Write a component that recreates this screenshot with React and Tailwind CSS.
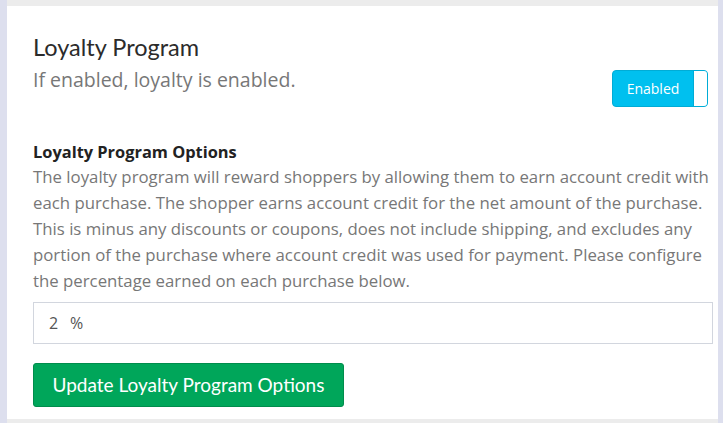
import React, { useState } from 'react';

const lines = [
  'The loyalty program will reward shoppers by allowing them to earn account credit with',
  'each purchase. The shopper earns account credit for the net amount of the purchase.',
  'This is minus any discounts or coupons, does not include shipping, and excludes any',
  'portion of the purchase where account credit was used for payment. Please configure',
  'the percentage earned on each purchase below.',
];

export default function App() {
  const [enabled, setEnabled] = useState(true);
  const [percent, setPercent] = useState('2');

  return (
    <div className="w-[723px] h-[423px] bg-[#dddfee] flex overflow-hidden">
      <div className="ml-[7px] w-[711px] flex flex-col bg-[#ececec] pt-[6px]">
        <div className="bg-white h-[413px] pl-[26px] pr-[6px] pt-[26px]" style={{ fontFamily: '"Open Sans", sans-serif' }}>
          <h1 className="text-[23.5px] leading-[30px] text-[#2b2b2b]" style={{ fontFamily: 'Lato, sans-serif' }}>Loyalty Program</h1>
          <div className="flex items-start justify-between">
            <p className="mt-[5px] text-[19.5px] leading-[26px] text-[#777]">
              If enabled, loyalty is enabled.
            </p>
            <button
              onClick={() => setEnabled(!enabled)}
              className="mt-[8px] mr-[4px] w-[96px] h-[37px] rounded-[4px] bg-[#00c0ef] border border-[#00acd6] flex items-center p-0"
            >
              <span className="flex-1 text-center text-white text-[14px]">
                {enabled ? 'Enabled' : 'Disabled'}
              </span>
              <span className="w-[14px] h-[35px] bg-white rounded-r-[3px] border-l border-[#00acd6]" />
            </button>
          </div>

          <h2 className="mt-[35px] text-[16.4px] leading-[20px] font-bold text-[#222]">Loyalty Program Options</h2>
          <p className="mt-[2px] text-[16.8px] leading-[26px] text-[#777] whitespace-nowrap">
            {lines.map((l, i) => (
              <span key={i} className="block">{l}</span>
            ))}
          </p>

          <div className="mt-[8px] w-[680px] h-[42px] border border-[#d2d6de] flex items-center pl-[15px] text-[#555] text-[16px]">
            <input
              value={percent}
              onChange={e => setPercent(e.target.value)}
              className="w-[12px] outline-none bg-transparent"
            />
            <span className="ml-[9px]">%</span>
          </div>

          <button className="mt-[19px] w-[311px] h-[44px] rounded-[3px] bg-[#00a65a] border border-[#008d4c] text-white text-[19px]" style={{ fontFamily: 'Lato, sans-serif' }}>
            Update Loyalty Program Options
          </button>
        </div>
      </div>
    </div>
  );
}
